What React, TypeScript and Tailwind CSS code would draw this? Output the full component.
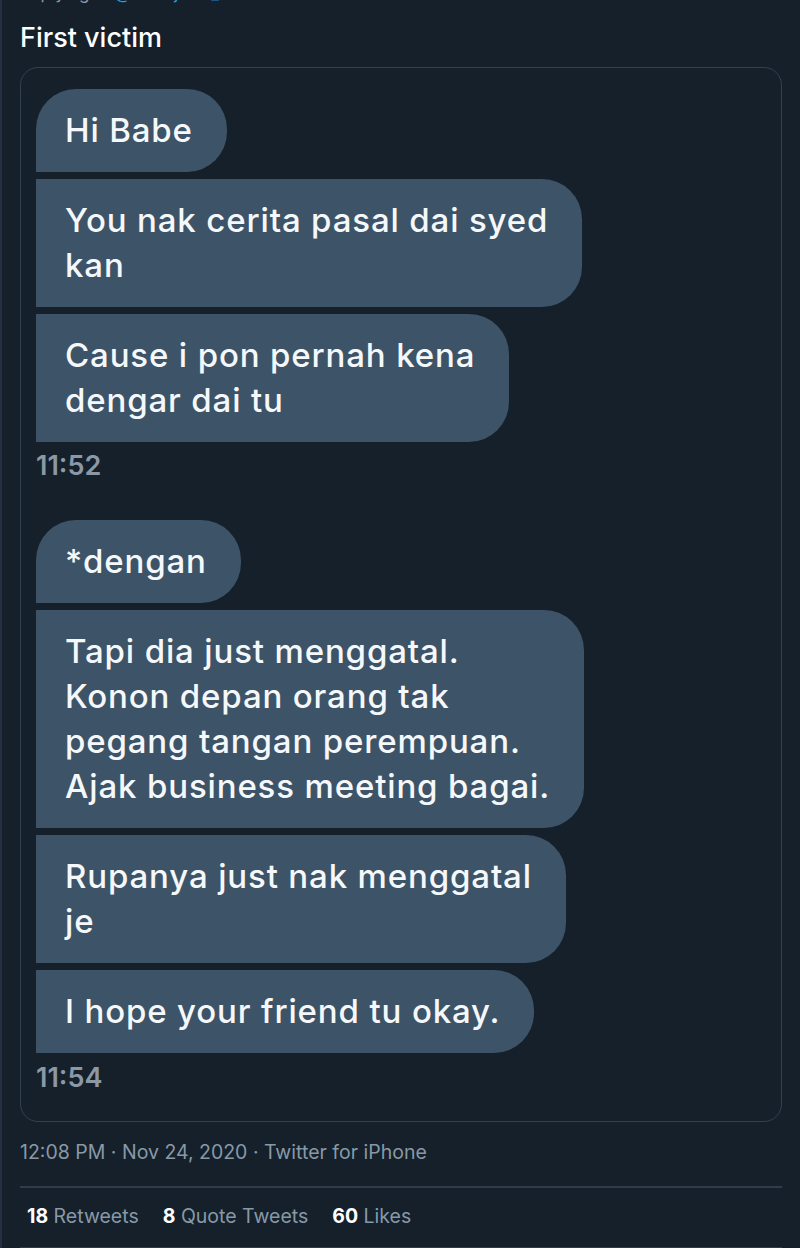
import React from "react";

const font = { fontFamily: "Inter, 'Liberation Sans', sans-serif" };

function Bubble({ children, first }: { children: React.ReactNode; first?: boolean }) {
  return (
    <div
      className={`self-start bg-[#3d5367] text-[#f5f8fa] text-[33px] leading-[45px] font-medium tracking-[0.85px] pl-[29px] pr-[34px] py-[19px] rounded-r-[40px] ${
        first ? "rounded-tl-[40px]" : ""
      }`}
    >
      {children}
    </div>
  );
}

export default function App() {
  return (
    <div className="w-[800px] h-[1248px] bg-[#15202b] overflow-hidden border-l-2 border-[#223040]" style={font}>
      <div className="pl-[18px] pr-[18px]">
        <div className="-mt-[18px] h-[22px] text-[17px] leading-[22px] text-[#8899a6]">
          Replying to <span className="text-[#1da1f2]">@ainnajwaa_</span>
        </div>
        <div className="mt-[18px] text-[27px] leading-[32px] text-white font-medium">First victim</div>
        <div className="mt-[13px] border border-[#324150] rounded-[18px] pl-[15px] pt-[21px] pb-[28px] flex flex-col">
          <div className="flex flex-col gap-[7px]">
            <Bubble first>Hi Babe</Bubble>
            <Bubble>
              You nak cerita pasal dai syed
              <br />
              kan
            </Bubble>
            <Bubble>
              Cause i pon pernah kena
              <br />
              dengar dai tu
            </Bubble>
          </div>
          <div className="mt-[9px] text-[27px] leading-[30px] font-semibold text-[#8b98a5]">11:52</div>
          <div className="mt-[39px] flex flex-col gap-[7px]">
            <Bubble first>*dengan</Bubble>
            <Bubble>
              Tapi dia just menggatal.
              <br />
              Konon depan orang tak
              <br />
              pegang tangan perempuan.
              <br />
              Ajak business meeting bagai.
            </Bubble>
            <Bubble>
              Rupanya just nak menggatal
              <br />
              je
            </Bubble>
            <Bubble>I hope your friend tu okay.</Bubble>
          </div>
          <div className="mt-[10px] text-[27px] leading-[30px] font-semibold text-[#8b98a5]">11:54</div>
        </div>
        <div className="mt-[18px] text-[19.5px] leading-[24px] text-[#8899a6]">
          12:08 PM · Nov 24, 2020 · Twitter for iPhone
        </div>
        <div className="mt-[22px] h-[2px] bg-[#2f3d4a]" />
        <div className="pl-[7px] pt-[16px] pb-[19px] flex gap-[24px] text-[19.5px] leading-[24px]">
          <span>
            <span className="font-bold text-white">18</span> <span className="text-[#8899a6]">Retweets</span>
          </span>
          <span>
            <span className="font-bold text-white">8</span> <span className="text-[#8899a6]">Quote Tweets</span>
          </span>
          <span>
            <span className="font-bold text-white">60</span> <span className="text-[#8899a6]">Likes</span>
          </span>
        </div>
        <div className="h-[1px] bg-[#2f3d4a]" />
      </div>
    </div>
  );
}
